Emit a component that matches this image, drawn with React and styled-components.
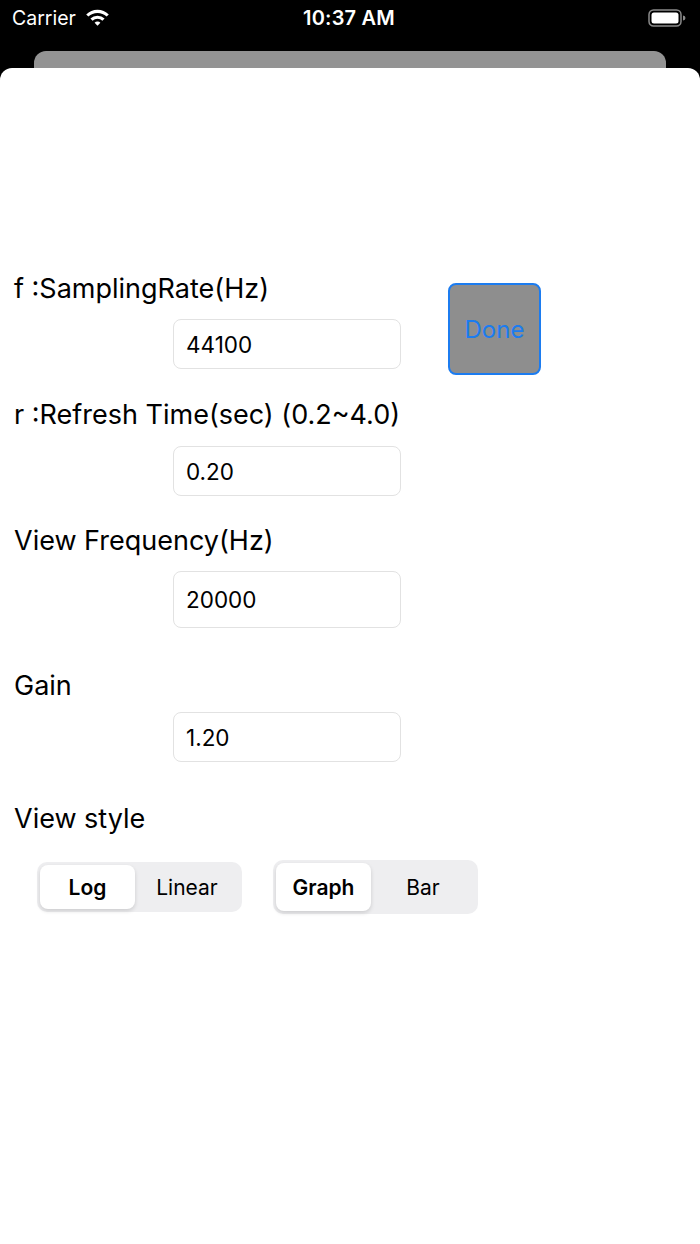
import styled, { createGlobalStyle } from "styled-components";

const GlobalStyle = createGlobalStyle`
  html, body {
    margin: 0;
    padding: 0;
    background: #000;
  }
  body {
    font-family: Inter, "Noto Sans", "Liberation Sans", sans-serif;
    -webkit-font-smoothing: antialiased;
  }
`;

function WifiIcon() {
  return (
    <svg width="25" height="18" viewBox="0 0 25 18">
      <path d="M1.2 6.4 A16 16 0 0 1 23.8 6.4 L21.6 8.6 A13 13 0 0 0 3.4 8.6 Z" fill="#fff" />
      <path d="M5.4 10.6 A10 10 0 0 1 19.6 10.6 L17.4 12.8 A7 7 0 0 0 7.6 12.8 Z" fill="#fff" />
      <path d="M9.6 14.8 A4 4 0 0 1 15.4 14.8 L12.5 17.7 Z" fill="#fff" />
    </svg>
  );
}

function BatteryIcon() {
  return (
    <svg width="38" height="18" viewBox="0 0 38 18">
      <rect x="1" y="1" width="32" height="16" rx="4.5" fill="none" stroke="#8a8a8a" strokeWidth="1.5" />
      <rect x="3.5" y="3.5" width="27" height="11" rx="2.5" fill="#fff" />
      <path d="M35 6.5 a2.5 2.5 0 0 1 0 5 Z" fill="#8a8a8a" />
    </svg>
  );
}

function Segmented({ items, selected, height }) {
  return (
    <SegmentTrack $height={height}>
      {items.map((item) => (
        <Segment key={item} $active={item === selected}>
          {item}
        </Segment>
      ))}
    </SegmentTrack>
  );
}

export default function App() {
  return (
    <>
      <GlobalStyle />
      <StatusBar>
        <Carrier>
          Carrier
          <WifiIcon />
        </Carrier>
        <Clock>10:37 AM</Clock>
        <Battery>
          <BatteryIcon />
        </Battery>
      </StatusBar>
      <BackCard />
      <Sheet>
        <TopRow>
          <Field>
            <Label>f :SamplingRate(Hz)</Label>
            <Input $top={15} defaultValue="44100" />
          </Field>
          <DoneButton>Done</DoneButton>
        </TopRow>
        <Field $top={25}>
          <Label>r :Refresh Time(sec) (0.2~4.0)</Label>
          <Input $top={16} defaultValue="0.20" />
        </Field>
        <Field $top={30}>
          <Label>View Frequency(Hz)</Label>
          <Input $top={15} $height={57} defaultValue="20000" />
        </Field>
        <Field $top={43}>
          <Label>Gain</Label>
          <Input $top={11} defaultValue="1.20" />
        </Field>
        <Field $top={42}>
          <Label>View style</Label>
        </Field>
        <SegmentRow>
          <Segmented items={["Log", "Linear"]} selected="Log" height={50} />
          <Segmented items={["Graph", "Bar"]} selected="Graph" height={54} />
        </SegmentRow>
      </Sheet>
    </>
  );
}

const StatusBar = styled.div`
  height: 36px;
  padding: 0 14px 0 12px;
  display: grid;
  grid-template-columns: 1fr auto 1fr;
  align-items: center;
  color: #fff;
`;

const Carrier = styled.div`
  display: flex;
  align-items: center;
  gap: 9px;
  font-size: 19.5px;
  svg {
    margin-top: -3px;
  }
`;

const Clock = styled.div`
  font-size: 20px;
  font-weight: 600;
  letter-spacing: 0.2px;
`;

const Battery = styled.div`
  display: flex;
  justify-content: flex-end;
`;

const BackCard = styled.div`
  margin: 15px 34px 0;
  height: 17px;
  background: #939393;
  border-radius: 12px 12px 0 0;
`;

const Sheet = styled.div`
  background: #fff;
  border-radius: 12px 12px 0 0;
  min-height: calc(100vh - 68px);
  padding: 206px 14px 0;
  box-sizing: border-box;
`;

const TopRow = styled.div`
  display: flex;
  align-items: flex-start;
`;

const Field = styled.div`
  width: 387px;
  margin-top: ${(p) => p.$top || 0}px;
  display: flex;
  flex-direction: column;
`;

const Label = styled.div`
  font-size: 27px;
  line-height: 30px;
  color: #000;
  white-space: nowrap;
`;

const Input = styled.input`
  margin: ${(p) => p.$top}px 0 0 159px;
  width: 228px;
  height: ${(p) => p.$height || 50}px;
  box-sizing: border-box;
  border: 1px solid #e2e2e2;
  border-radius: 8px;
  padding: 0 12px;
  font-family: inherit;
  font-size: 22.5px;
  color: #000;
  background: #fff;
  outline: none;
`;

const DoneButton = styled.button`
  margin: 9px 0 0 47px;
  width: 93px;
  height: 92px;
  background: #8e8e8e;
  border: 2px solid #1c7cf0;
  border-radius: 8px;
  color: #1c7cf0;
  font-family: inherit;
  font-size: 24px;
  padding: 0;
`;

const SegmentRow = styled.div`
  margin: 26px 0 0 23px;
  display: flex;
  align-items: center;
  gap: 31px;
`;

const SegmentTrack = styled.div`
  width: 205px;
  height: ${(p) => p.$height}px;
  box-sizing: border-box;
  padding: 3px;
  border-radius: 10px;
  background: #eeeef0;
  display: grid;
  grid-template-columns: 95px 1fr;
`;

const Segment = styled.div`
  display: flex;
  align-items: center;
  justify-content: center;
  border-radius: 8px;
  font-size: 21px;
  font-weight: ${(p) => (p.$active ? 600 : 400)};
  color: #000;
  background: ${(p) => (p.$active ? "#fff" : "transparent")};
  box-shadow: ${(p) => (p.$active ? "0 2px 4px rgba(0,0,0,0.14)" : "none")};
`;
